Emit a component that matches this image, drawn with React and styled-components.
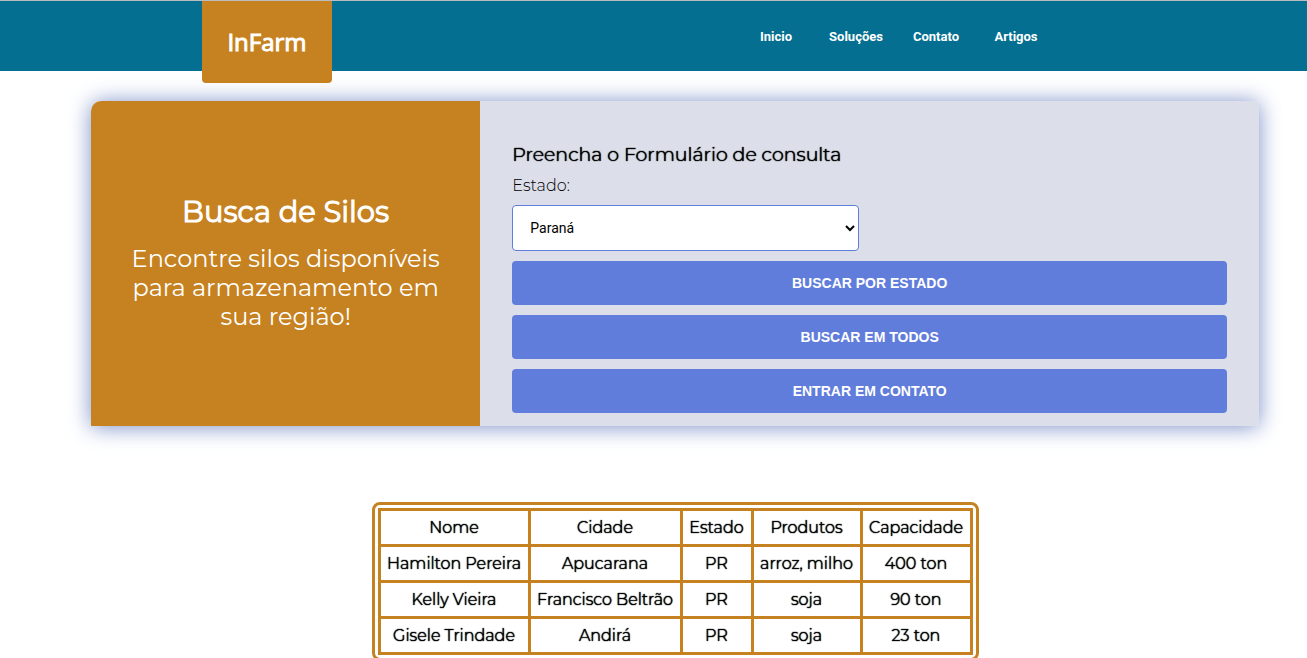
import React from "react";
import styled, { createGlobalStyle } from "styled-components";

const orange = "#c68120";
const blue = "#617ddc";
const display = `Montserrat, Inter, "Open Sans", sans-serif`;

const GlobalStyle = createGlobalStyle`
  *, *::before, *::after { box-sizing: border-box; }
  body {
    margin: 0;
    background: #fff;
    color: #000;
    font-family: ${display};
  }
  h1, h2, p { margin: 0; }
`;

const Header = styled.header`
  display: flex;
  align-items: flex-start;
  justify-content: space-between;
  height: 71px;
  padding: 0 251px 0 202px;
  border-top: 1px solid #b9bdbf;
  background: #046f91;
`;

const Logo = styled.a`
  position: relative;
  z-index: 1;
  display: flex;
  align-items: center;
  justify-content: center;
  width: 130px;
  height: 82px;
  border-radius: 0 0 4px 4px;
  background: ${orange};
  color: #fff;
  font: 400 24px/32px "Open Sans", sans-serif;
  -webkit-text-stroke: 1px currentColor;
  text-decoration: none;
`;

const Nav = styled.nav`
  display: grid;
  grid-template-columns: repeat(4, 80px);
  align-items: center;
  height: 72px;
`;

const NavLink = styled.a`
  color: #fff;
  font: 700 13px/20px Roboto, sans-serif;
  text-align: center;
  text-decoration: none;
`;

const Main = styled.main`
  display: flex;
  flex-direction: column;
  align-items: center;
  gap: 76px;
  padding: 30px 48px 0 91px;
`;

const Card = styled.section`
  display: grid;
  grid-template-columns: 1fr 2fr;
  width: 100%;
  border-radius: 10px 4px 4px 0;
  box-shadow: 0 1px 22px #7b8fc8;
`;

const Intro = styled.div`
  display: flex;
  flex-direction: column;
  justify-content: center;
  gap: 12px;
  padding: 0 32px 4px;
  border-radius: 10px 0 0 0;
  background: ${orange};
  color: #fff;
  text-align: center;
`;

const Title = styled.h1`
  font-size: 29px;
  font-weight: 400;
  line-height: 40px;
  -webkit-text-stroke: 1px currentColor;
`;

const Lead = styled.p`
  font-size: 24px;
  font-weight: 400;
  line-height: 29px;
`;

const Form = styled.form`
  display: flex;
  flex-direction: column;
  gap: 10px;
  padding: 42px 32px 13px;
  border-radius: 0 4px 4px 0;
  background: #dcdee9;
`;

const FormTitle = styled.h2`
  font-size: 19px;
  font-weight: 300;
  line-height: 24px;
  text-shadow: 0 0 1px currentColor, 0 0 1px currentColor;
`;

const Label = styled.label`
  font-size: 16px;
  font-weight: 300;
  line-height: 18px;
`;

const Select = styled.select`
  width: 347px;
  height: 46px;
  padding: 0 0 0 13px;
  border: 1px solid ${blue};
  border-radius: 4px;
  background: #fff;
  color: #000;
  font: 400 14px/20px Roboto, sans-serif;
`;

const Button = styled.button`
  height: 44px;
  border: 0;
  border-radius: 4px;
  background: ${blue};
  color: #fff;
  font: 700 14px/20px "Liberation Sans", Arial, sans-serif;
  text-transform: uppercase;
`;

const TableFrame = styled.div`
  padding: 3px;
  border: 3px solid ${orange};
  border-radius: 8px;
`;

const Table = styled.table`
  width: 595px;
  border-collapse: collapse;
  table-layout: fixed;
  font-size: 16px;
  line-height: 20px;
  text-align: center;
  text-shadow: 0 0 1px currentColor, 0 0 1px currentColor;
`;

const Col = styled.col`
  width: ${({ $width }) => $width}px;
`;

const Cell = styled.td`
  height: 36px;
  padding: 0;
  border: 3px solid ${orange};
  font-weight: 300;
  white-space: nowrap;
`;

const links = ["Inicio", "Soluções", "Contato", "Artigos"];
const columns = [
  ["Nome", 150],
  ["Cidade", 152],
  ["Estado", 71],
  ["Produtos", 109],
  ["Capacidade", 110],
];
const silos = [
  ["Hamilton Pereira", "Apucarana", "PR", "arroz, milho", "400 ton"],
  ["Kelly Vieira", "Francisco Beltrão", "PR", "soja", "90 ton"],
  ["Gisele Trindade", "Andirá", "PR", "soja", "23 ton"],
];

export default function App() {
  return (
    <>
      <GlobalStyle />
      <Header>
        <Logo href="#">InFarm</Logo>
        <Nav>
          {links.map((text) => (
            <NavLink key={text} href="#">{text}</NavLink>
          ))}
        </Nav>
      </Header>
      <Main>
        <Card>
          <Intro>
            <Title>Busca de Silos</Title>
            <Lead>Encontre silos disponíveis para armazenamento em sua região!</Lead>
          </Intro>
          <Form onSubmit={(event) => event.preventDefault()}>
            <FormTitle>Preencha o Formulário de consulta</FormTitle>
            <Label htmlFor="estado">Estado:</Label>
            <Select id="estado" defaultValue="PR">
              <option value="PR">Paraná</option>
            </Select>
            <Button type="submit">Buscar por estado</Button>
            <Button type="button">Buscar em todos</Button>
            <Button type="button">Entrar em contato</Button>
          </Form>
        </Card>
        <TableFrame>
          <Table>
            <colgroup>
              {columns.map(([name, width]) => (
                <Col key={name} $width={width} />
              ))}
            </colgroup>
            <thead>
              <tr>
                {columns.map(([name]) => (
                  <Cell as="th" scope="col" key={name}>{name}</Cell>
                ))}
              </tr>
            </thead>
            <tbody>
              {silos.map((silo) => (
                <tr key={silo[0]}>
                  {silo.map((value, index) => (
                    <Cell key={index}>{value}</Cell>
                  ))}
                </tr>
              ))}
            </tbody>
          </Table>
        </TableFrame>
      </Main>
    </>
  );
}
